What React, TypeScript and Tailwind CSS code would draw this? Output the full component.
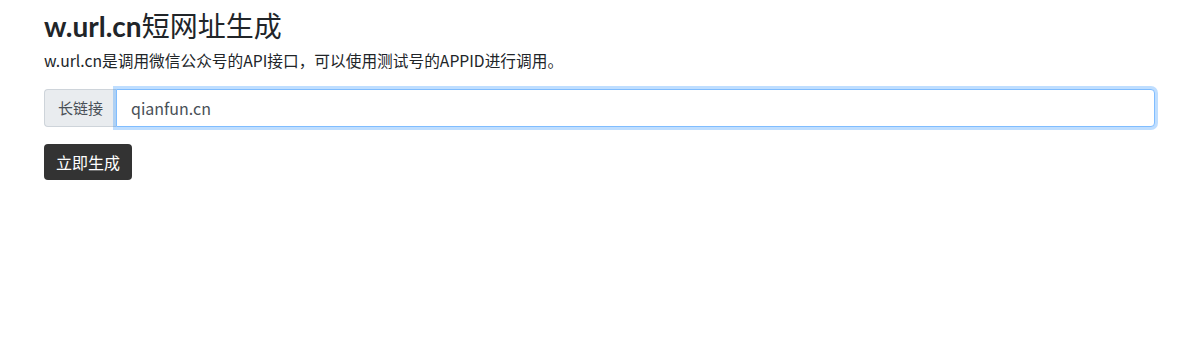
export default function App() {
  return (
    <div
      className="min-h-screen bg-white pl-[44px] pr-[38px] pt-[8px] text-[#212529]"
      style={{ fontFamily: '"Noto Sans CJK SC", "Noto Sans", sans-serif' }}
    >
      <h3 className="h-[34px] text-[28px] font-normal leading-[34px] mb-[7px]">
        <span className="font-bold" style={{ fontFamily: 'Lato, "Noto Sans CJK SC", sans-serif' }}>
          w.url.cn
        </span>
        短网址生成
      </h3>
      <p className="h-[24px] text-[15.7px] leading-[24px] mb-[16px]">
        w.url.cn是调用微信公众号的API接口，可以使用测试号的APPID进行调用。
      </p>
      <div className="flex h-[38px] mb-[17px]">
        <span className="flex items-center px-[13px] text-[15px] text-[#495057] bg-[#e9ecef] border border-[#ced4da] border-r-0 rounded-l-[4px]">
          长链接
        </span>
        <input
          autoFocus
          defaultValue="qianfun.cn"
          className="flex-1 pl-[14px] pr-[12px] text-[16px] text-[#495057] caret-[#212529] bg-white border border-[#80bdff] rounded-r-[4px] outline-none shadow-[0_0_0_3px_rgba(0,123,255,0.25)]"
        />
      </div>
      <button className="block h-[36px] px-[12px] text-[16px] text-white bg-[#333333] rounded-[4px]">
        立即生成
      </button>
    </div>
  )
}
